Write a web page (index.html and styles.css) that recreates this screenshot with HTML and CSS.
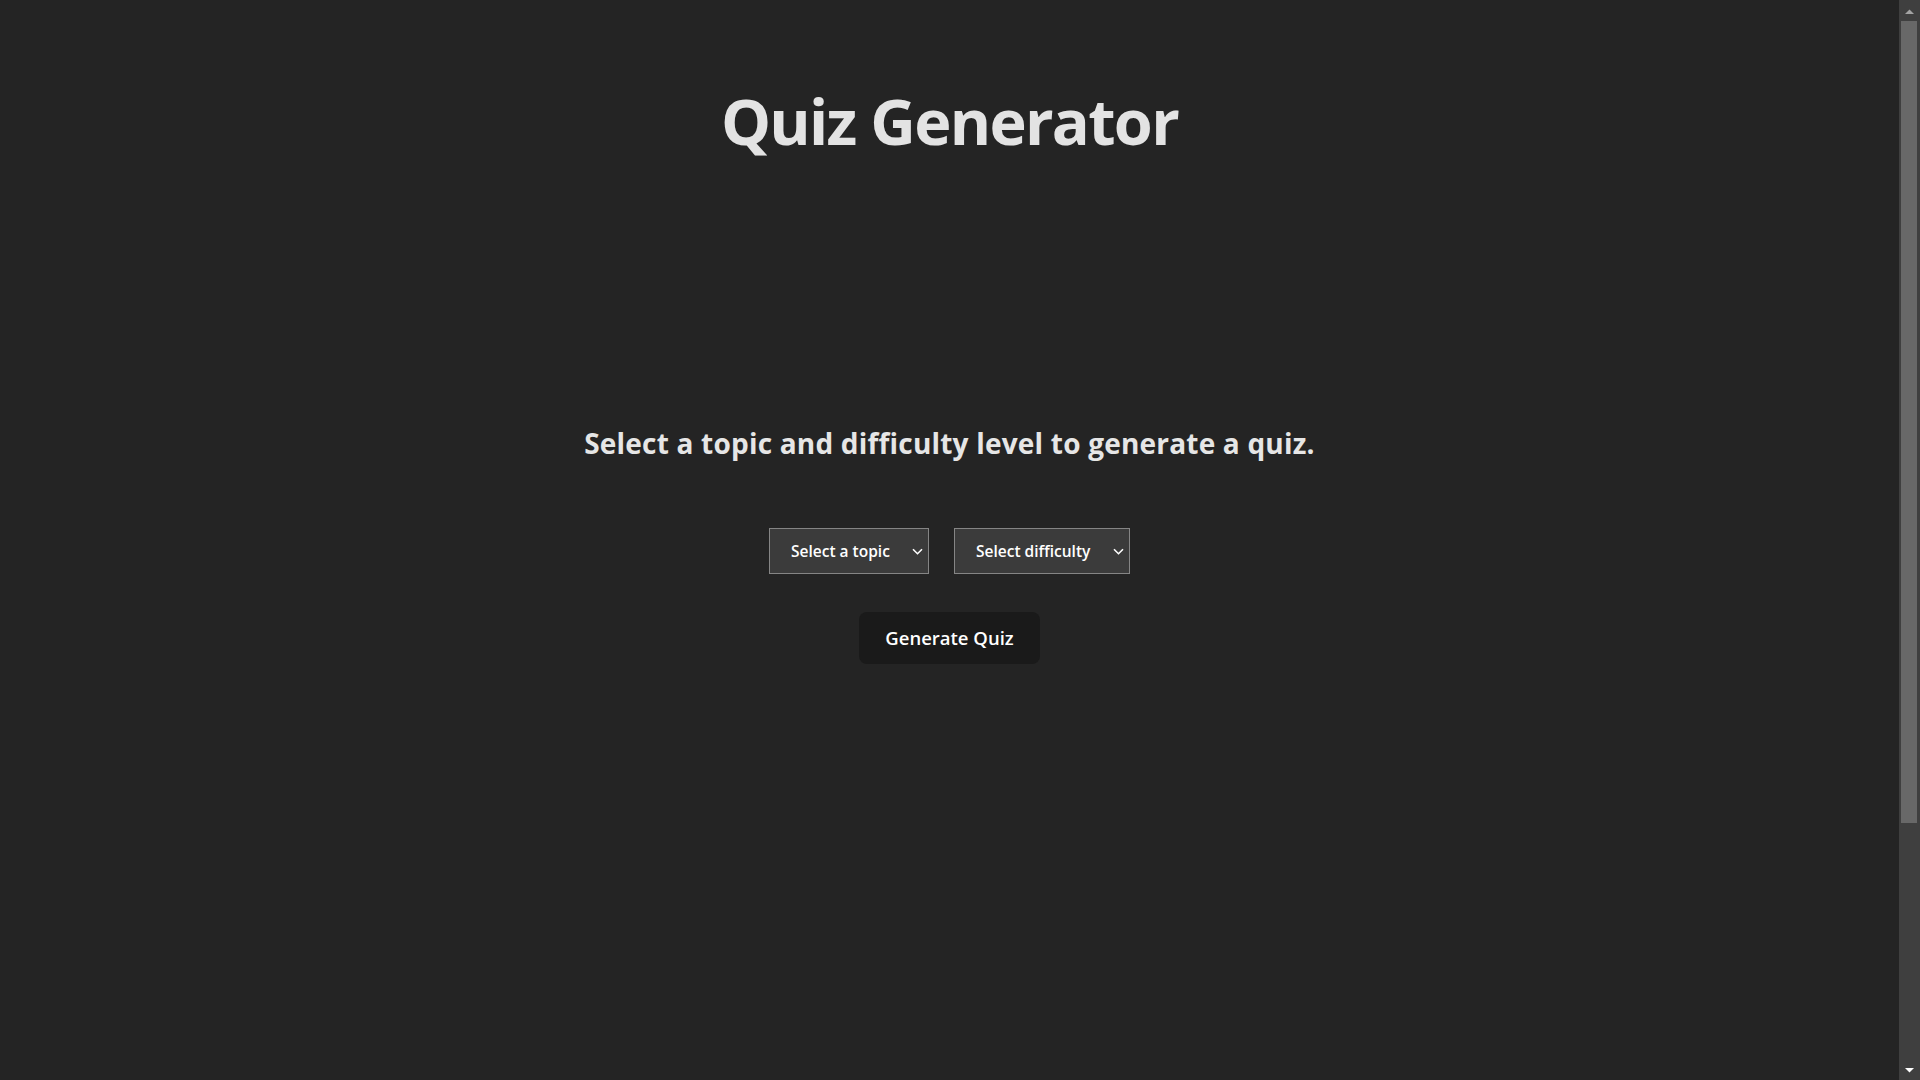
FILE: index.html
```html
<!DOCTYPE html>
<html lang="en">
<head>
<meta charset="utf-8">
<title>Quiz Generator</title>
<link rel="stylesheet" href="styles.css">
</head>
<body>
<div class="app">
  <h1 class="title">Quiz Generator</h1>
  <main class="quiz">
    <h2 class="prompt">Select a topic and difficulty level to generate a quiz.</h2>
    <div class="controls">
      <div class="select-wrap">
        <select class="select">
          <option>Select a topic</option>
        </select>
        <svg class="chevron" width="11" height="7" viewBox="0 0 11 7"><path d="M1 1.2l4.5 4.5 4.5-4.5" fill="none" stroke="#fff" stroke-width="1.6"/></svg>
      </div>
      <div class="select-wrap">
        <select class="select">
          <option>Select difficulty</option>
        </select>
        <svg class="chevron" width="11" height="7" viewBox="0 0 11 7"><path d="M1 1.2l4.5 4.5 4.5-4.5" fill="none" stroke="#fff" stroke-width="1.6"/></svg>
      </div>
    </div>
    <button class="generate">Generate Quiz</button>
  </main>
</div>
<div class="scrollbar" aria-hidden="true">
  <svg class="sb-arrow" width="21" height="21" viewBox="0 0 21 21"><path d="M6 14L10.5 9.5L15 14z" fill="#a3a3a3"/></svg>
  <div class="sb-track"><div class="sb-thumb"></div></div>
  <svg class="sb-arrow" width="21" height="17" viewBox="0 0 21 17"><path d="M6 5L10.5 9.5L15 5z" fill="#ffffff"/></svg>
</div>
</body>
</html>
```
FILE: styles.css
```css
html {
  background: #242424;
}
html::-webkit-scrollbar {
  display: none;
}
body {
  margin: 0;
  background: #242424;
  color: rgba(255, 255, 255, 0.87);
  font-family: "Open Sans", "Noto Sans", sans-serif;
}
.app {
  min-height: 1400px;
  box-sizing: border-box;
  padding-top: 86px;
  padding-right: 21px;
  display: flex;
  flex-direction: column;
  align-items: center;
  text-align: center;
}
.title {
  margin: 0;
  font-size: 63px;
  line-height: 1.1;
  font-weight: 700;
  letter-spacing: -1.7px;
  color: #e3e3e3;
}
.quiz {
  margin-top: 272px;
  display: flex;
  flex-direction: column;
  align-items: center;
}
.prompt {
  margin: 0;
  font-size: 28px;
  line-height: 1.2;
  font-weight: 700;
  letter-spacing: 0.2px;
  color: #e6e6e6;
}
.controls {
  margin-top: 67px;
  display: flex;
  gap: 25px;
}
.select-wrap {
  position: relative;
  display: flex;
}
.select {
  appearance: none;
  -webkit-appearance: none;
  height: 46px;
  margin: 0;
  padding: 0 38px 0 21px;
  background: #3b3b3b;
  color: #fff;
  border: 1px solid #858585;
  border-radius: 0;
  font-family: inherit;
  font-size: 15.5px;
  font-weight: 600;
}
.chevron {
  position: absolute;
  right: 6px;
  top: 20px;
  pointer-events: none;
}
.generate {
  margin-top: 38px;
  height: 52px;
  padding: 0 25px;
  border: 1px solid transparent;
  border-radius: 8px;
  background: #1a1a1a;
  color: #fff;
  font-family: inherit;
  font-size: 18.5px;
  font-weight: 600;
}
.scrollbar {
  position: fixed;
  top: 0;
  right: 0;
  width: 21px;
  height: 100vh;
  background: #3f3f3f;
  display: flex;
  flex-direction: column;
}
.sb-arrow {
  flex: none;
  display: block;
}
.sb-track {
  flex: 1;
  display: flex;
  flex-direction: column;
}
.sb-thumb {
  height: 802px;
  margin: 0 3px 0 2px;
  background: #686868;
}
```
